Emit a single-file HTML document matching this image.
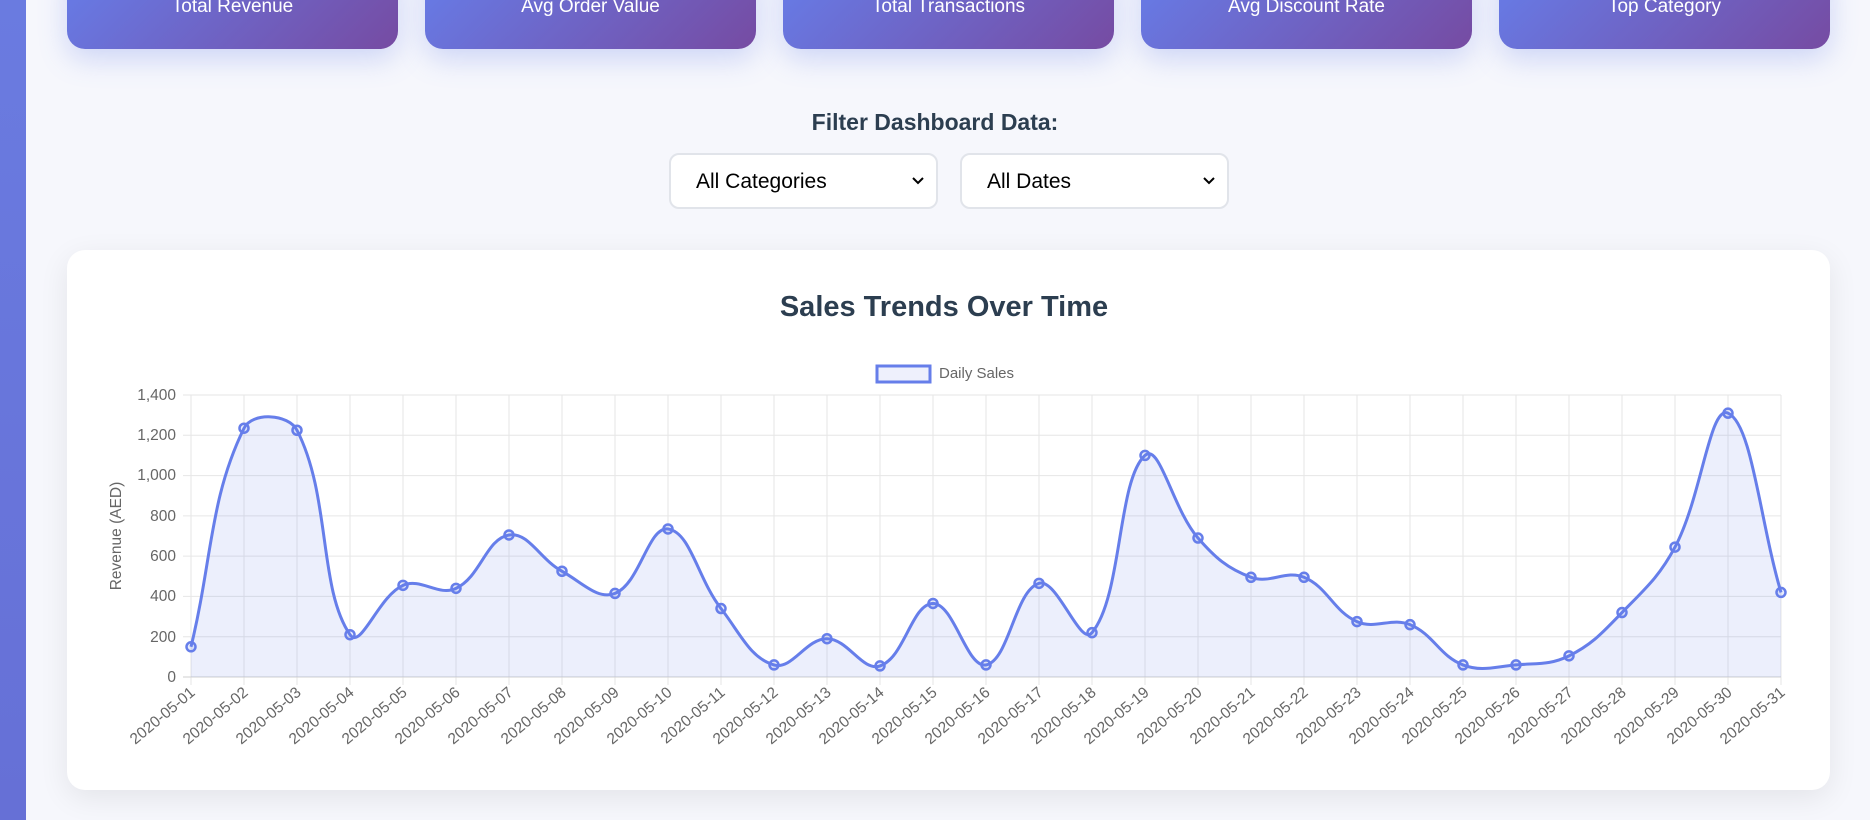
<!DOCTYPE html>
<html><head><meta charset="utf-8"><style>
*{box-sizing:border-box;margin:0;padding:0}
body{width:1870px;height:820px;overflow:hidden;background:#f6f7fc;font-family:"Liberation Sans",sans-serif;position:relative}
.side{position:absolute;left:0;top:0;width:26px;height:820px;background:linear-gradient(180deg,#6a7be0,#6670d6)}
.card{position:absolute;top:-40px;height:89px;width:331px;border-radius:18px;background:linear-gradient(135deg,#667eea,#764ba2);box-shadow:0 10px 28px rgba(102,126,234,.28);color:#fff;font-size:19px;text-align:center;padding-top:36px}
.flabel{position:absolute;top:109px;left:0;width:1870px;text-align:center;font-size:23px;font-weight:bold;color:#2c3e50}
.sel{position:absolute;top:153px;width:269px;height:56px;border:2px solid #e1e4ea;border-radius:10px;background:#fff;font-size:21px;color:#000;padding:15px 0 0 25px}
.sel svg{position:absolute;right:12px;top:22px}
.chart{position:absolute;left:67px;top:250px;width:1763px;height:540px;background:#fff;border-radius:18px;box-shadow:0 8px 30px rgba(0,0,0,.08)}
.title{position:absolute;top:291px;left:0;width:1870px;text-align:center;font-size:29px;font-weight:bold;color:#2c3e50;padding-left:18px}
</style></head><body>
<div class="side"></div>
<div class="card" style="left:67px">Total Revenue</div>
<div class="card" style="left:425px">Avg Order Value</div>
<div class="card" style="left:783px">Total Transactions</div>
<div class="card" style="left:1141px">Avg Discount Rate</div>
<div class="card" style="left:1499px">Top Category</div>
<div class="flabel">Filter Dashboard Data:</div>
<div class="sel" style="left:669px">All Categories<svg width="12" height="8"><path d="M1 1l5 5 5-5" fill="none" stroke="#000" stroke-width="2"/></svg></div>
<div class="sel" style="left:960px">All Dates<svg width="12" height="8"><path d="M1 1l5 5 5-5" fill="none" stroke="#000" stroke-width="2"/></svg></div>
<div class="chart"></div>
<div class="title">Sales Trends Over Time</div>
<svg id="c" width="1870" height="820" style="position:absolute;left:0;top:0" font-family="Liberation Sans, sans-serif">
<rect x="877" y="366" width="53" height="16" fill="#eef0fc" stroke="#667eea" stroke-width="3"/>
<text x="939" y="378" font-size="15" fill="#666">Daily Sales</text>
<g font-size="15.5" fill="#666" text-anchor="end">
<text x="176" y="400">1,400</text><text x="176" y="440">1,200</text><text x="176" y="480">1,000</text><text x="176" y="521">800</text><text x="176" y="561">600</text><text x="176" y="601">400</text><text x="176" y="642">200</text><text x="176" y="682">0</text>
</g>
<text transform="translate(121,536) rotate(-90)" font-size="15.5" fill="#666" text-anchor="middle">Revenue (AED)</text>
<g id="grid"></g>
<g id="xl" font-size="15.5" fill="#666" text-anchor="end">
<text>2020-05-01</text><text>2020-05-02</text><text>2020-05-03</text><text>2020-05-04</text><text>2020-05-05</text><text>2020-05-06</text><text>2020-05-07</text><text>2020-05-08</text><text>2020-05-09</text><text>2020-05-10</text><text>2020-05-11</text><text>2020-05-12</text><text>2020-05-13</text><text>2020-05-14</text><text>2020-05-15</text><text>2020-05-16</text><text>2020-05-17</text><text>2020-05-18</text><text>2020-05-19</text><text>2020-05-20</text><text>2020-05-21</text><text>2020-05-22</text><text>2020-05-23</text><text>2020-05-24</text><text>2020-05-25</text><text>2020-05-26</text><text>2020-05-27</text><text>2020-05-28</text><text>2020-05-29</text><text>2020-05-30</text><text>2020-05-31</text>
</g>
<g id="plot"></g>
</svg>
<script>
var d=[150,1235,1225,210,455,440,705,525,415,735,340,60,190,55,365,60,465,220,1100,690,495,495,275,260,60,60,105,320,645,1310,420];
var X=i=>191+53*i,Y=v=>677-v*282/1400;
var g=document.getElementById('grid'),h='';
for(var i=0;i<31;i++)h+='<line x1="'+X(i)+'" y1="395" x2="'+X(i)+'" y2="685" stroke="#e6e6e6"/>';
for(var v=0;v<=1400;v+=200)h+='<line x1="183" y1="'+Y(v)+'" x2="1781" y2="'+Y(v)+'" stroke="'+(v?'#e6e6e6':'#cfcfcf')+'"/>';
g.innerHTML=h;
document.querySelectorAll('#xl text').forEach((e,i)=>{e.setAttribute('transform','translate('+(X(i)+5)+',694) rotate(-40)');});
var P=d.map((v,i)=>[X(i),Y(v)]),T=0.4,N=[],Pv=[];
var dist=(a,b)=>Math.hypot(a[0]-b[0],a[1]-b[1]);
P.forEach((b,i)=>{var a=P[i-1]||b,c=P[i+1]||b,d01=dist(a,b),d12=dist(b,c),s=d01+d12||1;
var fa=T*d01/s,fb=T*d12/s;
Pv[i]=[b[0]-fa*(c[0]-a[0]),b[1]-fa*(c[1]-a[1])];N[i]=[b[0]+fb*(c[0]-a[0]),b[1]+fb*(c[1]-a[1])];
[Pv[i],N[i]].forEach(q=>{q[1]=Math.max(395,Math.min(677,q[1]))});});
var p='M'+P[0];
for(var i=0;i<30;i++)p+=' C'+N[i]+' '+Pv[i+1]+' '+P[i+1];
var s='<path d="'+p+' L'+X(30)+',677 L'+X(0)+',677Z" fill="rgba(102,126,234,0.12)"/><path d="'+p+'" fill="none" stroke="#667eea" stroke-width="3"/>';
P.forEach(q=>s+='<circle cx="'+q[0]+'" cy="'+q[1]+'" r="4.5" fill="rgba(102,126,234,0.15)" stroke="#667eea" stroke-width="2.5"/>');
document.getElementById('plot').innerHTML=s;
</script>
</body></html>
